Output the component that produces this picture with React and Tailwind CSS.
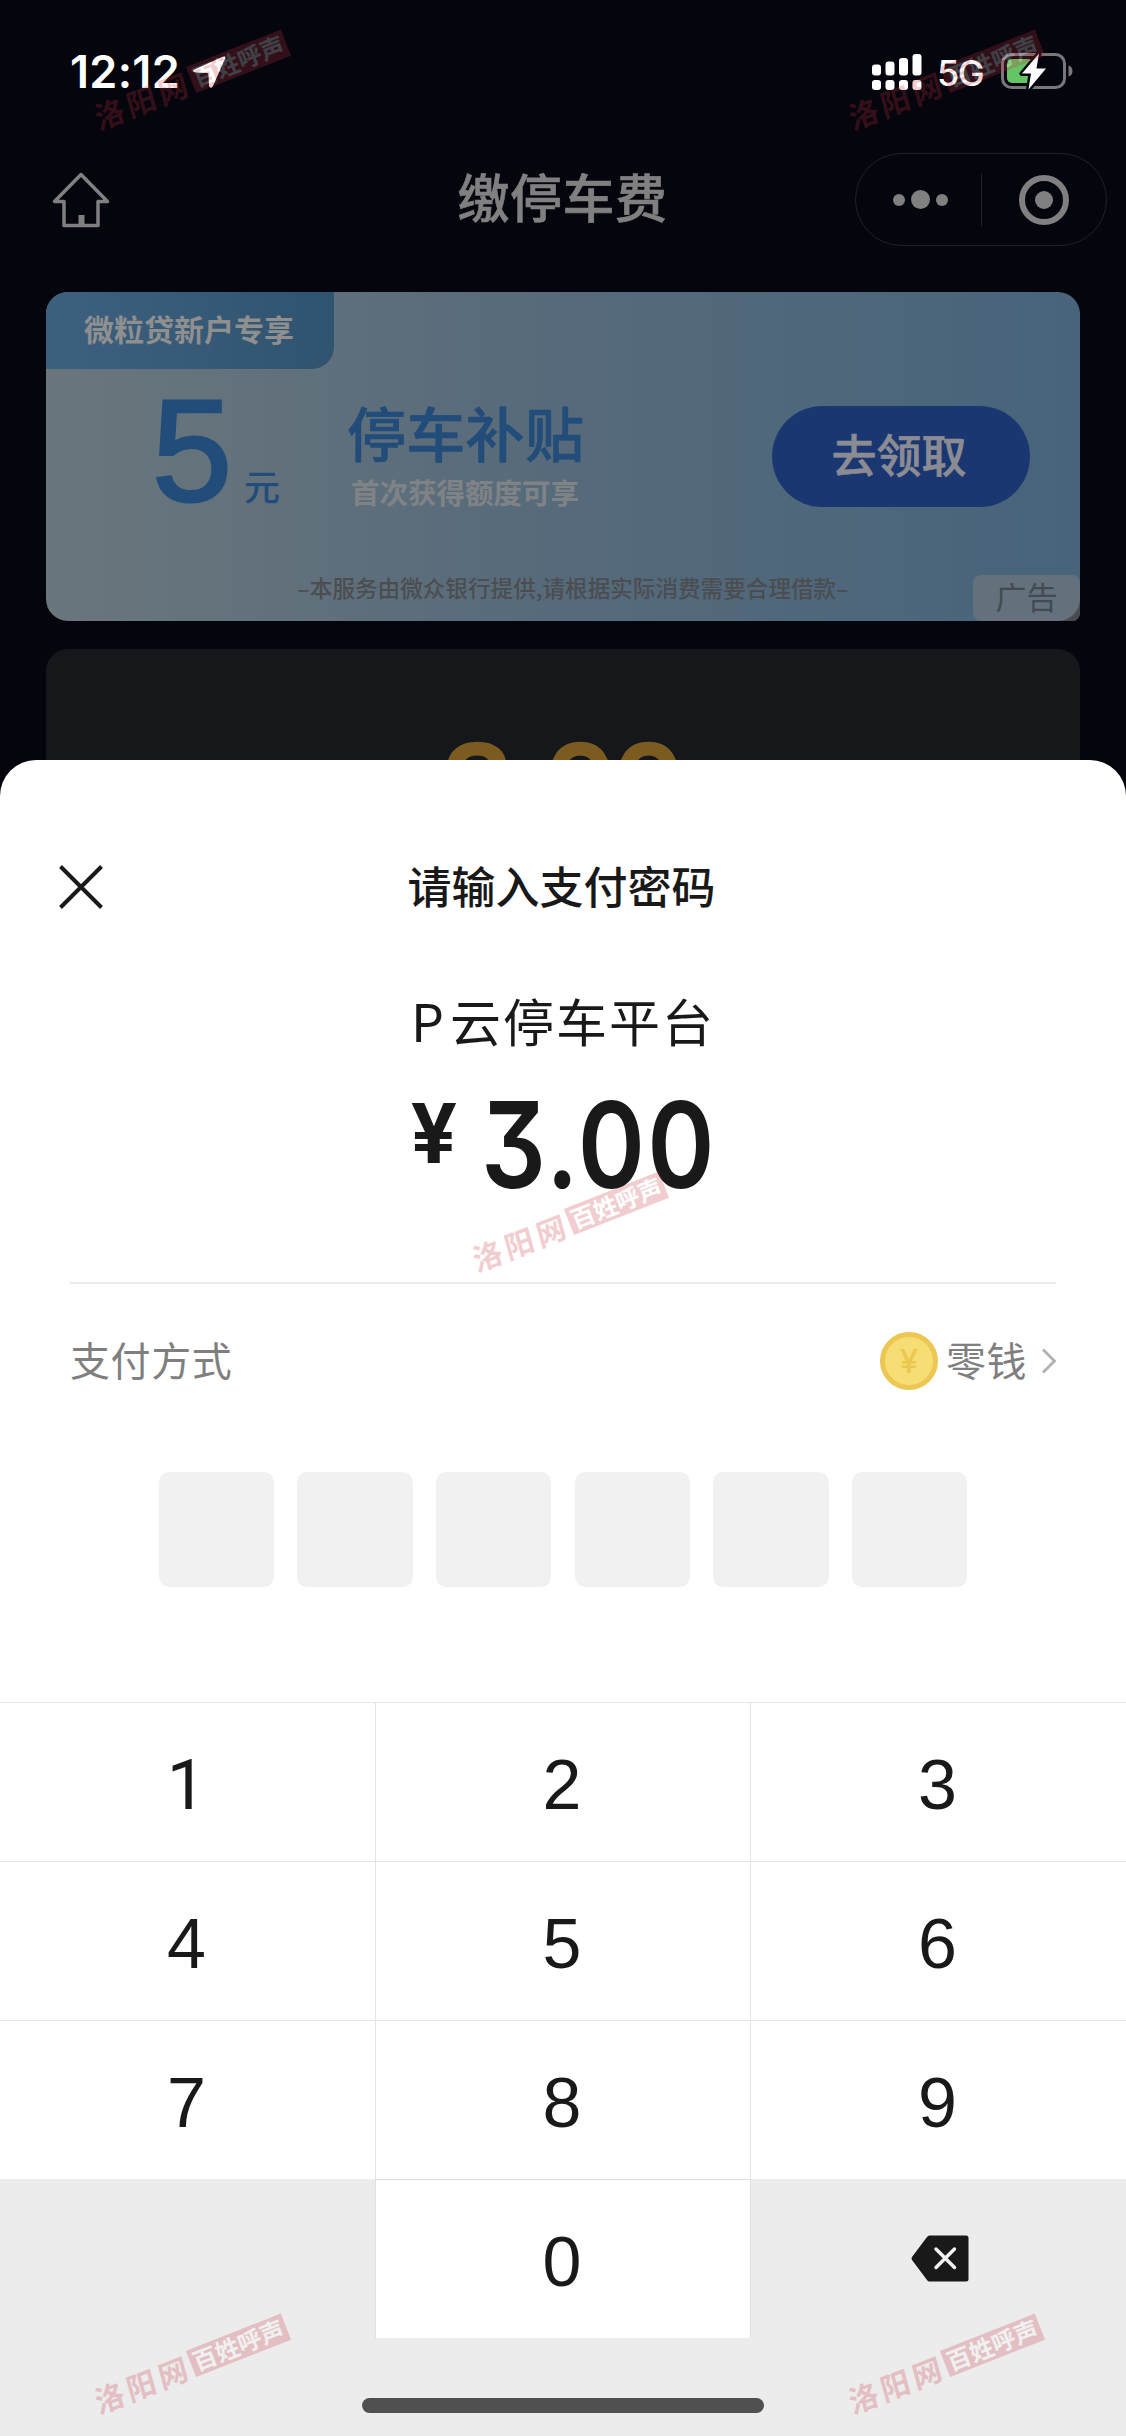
import React from 'react';

const keys = ['1', '2', '3', '4', '5', '6', '7', '8', '9'];

const watermarks = [
  { x: 191, y: 80 },
  { x: 945, y: 80 },
  { x: 569, y: 1222 },
  { x: 191, y: 2364 },
  { x: 945, y: 2364 },
];

// Status Bar
const StatusBar = () => {
  return (
    <div className="flex h-[153px] items-start justify-between pl-[70px] pr-[51px] pt-[46px] text-white">
      <div className="flex h-[52px] items-center">
        <span className="w-[112px] whitespace-nowrap font-['Inter'] text-[45px] font-semibold leading-[52px] tracking-[0.300px]">12:12</span>
        <svg width="36" height="36" viewBox="0 0 36 36" className="ml-[9px]">
          <path d="M3.5 15.5 L31 3 Q35.5 1 33.7 5.5 L22 32 Q20 35.500 18 32 L17.500 20.500 Q17.500 19 16 19 L4.500 18.500 Q0 17.500 3.500 15.500Z" fill="#fff" />
        </svg>
      </div>
      <div className="flex h-[52px] items-center">
        <svg width="50" height="36" viewBox="0 0 50 36" fill="#fff">
          <rect x="0" y="10.500" width="9" height="11" rx="3" />
          <rect x="13.500" y="7.500" width="9" height="14" rx="3" />
          <rect x="27" y="4" width="9" height="17.500" rx="3" />
          <rect x="40.500" y="0" width="9" height="21.500" rx="3" />
          <rect x="0" y="26" width="9" height="10" rx="3" />
          <rect x="13.500" y="26" width="9" height="10" rx="3" />
          <rect x="27" y="26" width="9" height="10" rx="3" />
          <rect x="40.500" y="26" width="9" height="10" rx="3" />
        </svg>
        <span className="ml-[15px] w-[48px] whitespace-nowrap pt-[2px] font-['Inter'] text-[36px] font-medium leading-[48px] tracking-[-1.500px]">5G</span>
        <svg width="74" height="38" viewBox="0 0 74 38" className="ml-[16px]">
          <rect x="1.500" y="1.500" width="62" height="33" rx="9" fill="none" stroke="#77777c" strokeWidth="3" />
          <path d="M67.500 12.500 q4 1 4 5.500 t-4 5.500z" fill="#77777c" />
          <rect x="6" y="6" width="26" height="24" rx="5" fill="#65c466" />
          <path d="M38 0.500 L21 20.500 H30 L27.500 36.500 L45 15.500 H35.500Z" fill="#fff" stroke="#04050d" strokeWidth="5" strokeLinejoin="round" paintOrder="stroke" />
        </svg>
      </div>
    </div>
  );
};

// Mini program navigation
const NavBar = () => {
  return (
    <div className="flex h-[93px] items-center justify-between pl-[52px] pr-[19px]">
      <div className="w-[252px]">
        <svg width="58" height="56" viewBox="0 0 58 56" fill="none" stroke="#808080" strokeWidth="3.500" strokeLinejoin="round" strokeLinecap="round">
          <path d="M29 2.500 L55.500 29.500 H46 V53.500 H12 V29.500 H2.500 Z" />
          <path d="M29.500 43 V53" strokeWidth="6" strokeLinecap="butt" />
        </svg>
      </div>
      <div className="pb-2 pr-[34px] text-[52px] font-medium leading-[85px] tracking-[0.500px] text-[#808080] [-webkit-text-stroke:0.600px_#808080]">缴停车费</div>
      <div className="flex h-[93px] w-[252px] items-center rounded-full border border-[#212228]">
        <div className="flex w-[125px] items-center justify-center gap-[6px] pl-[5px]">
          <span className="size-3 rounded-full bg-[#808080]"></span>
          <span className="size-[19px] rounded-full bg-[#808080]"></span>
          <span className="size-3 rounded-full bg-[#808080]"></span>
        </div>
        <div className="h-[54px] w-px bg-[#212228]"></div>
        <div className="flex flex-1 items-center justify-center">
          <div className="flex size-[50px] items-center justify-center rounded-full border-[6px] border-[#808080]">
            <span className="size-[18px] rounded-full bg-[#808080]"></span>
          </div>
        </div>
      </div>
    </div>
  );
};

// Ad banner
const Banner = () => {
  return (
    <div className="relative mx-[46px] mt-[46px] flex h-[329px] flex-col overflow-hidden rounded-[22px] rounded-br-[8px] bg-linear-to-r from-[#6a767c] via-[#566a7b] to-[#47647b]">
      <div className="flex h-[77px] w-[288px] shrink-0 items-center justify-center rounded-br-[22px] bg-linear-to-r from-[#3d607f] to-[#30546f] pb-[5px] pr-[2px] text-[30px] font-bold leading-[72px] text-[#8f8f8f]">
        微粒贷新户专享
      </div>
      <div className="flex h-[180px] items-start pl-[106px]">
        <span className="w-[92px] font-['Liberation_Sans'] text-[144px] leading-[166px] text-[#224c79] [-webkit-text-stroke:3px_#224c79]">5</span>
        <span className="w-[103px] pt-[90px] text-[36px] font-medium leading-[52px] text-[#224c79]">元</span>
        <div className="w-[425px]">
          <div className="pt-[28px] text-[59px] font-medium leading-[70px] tracking-[0.300px] text-[#224c79] [-webkit-text-stroke:0.600px_#224c79]">停车补贴</div>
          <div className="pl-1 pt-[8px] text-[28.500px] font-bold leading-[34px] text-[#808386]">首次获得额度可享</div>
        </div>
        <div className="mt-[37px] flex h-[101px] w-[258px] items-center justify-center rounded-full bg-[#1b3772] pb-[5px] pr-[4px] text-[45px] font-medium text-[#8b8c93] [-webkit-text-stroke:0.600px_#8b8c93]">去领取</div>
      </div>
      <div className="pt-[5px] text-center text-[22.600px] font-medium leading-[67px] text-[#4b4d50]">
        <span className="pl-[20px]">–本服务由微众银行提供,请根据实际消费需要合理借款–</span>
      </div>
      <div className="absolute bottom-0 right-0 size-5 bg-[#4a4b4e]"></div>
      <div className="absolute bottom-0 right-0 flex h-[46px] w-[107px] items-center justify-center rounded-[8px] rounded-br-[22px] bg-[#64707b] pb-[4px] text-[31px] leading-[40px] text-[#424a53]">
        广告
      </div>
    </div>
  );
};

// Keypad
const Keypad = () => {
  return (
    <div className="flex flex-1 flex-col bg-[#ececec]">
      <div className="grid grid-cols-[376px_375px_375px] font-['Liberation_Sans'] text-[70px] text-[#191919]">
        {keys.map((key) => (
          <div
            key={key}
            className={`
              flex h-[159px] items-center justify-center border-r border-t border-[#e4e4e4] bg-white pr-[2px] pt-[6px] nth-[3n]:border-r-0
              ${key === '1' ? "font-['Roboto']" : ''}
            `}
          >
            {key}
          </div>
        ))}
        <div className="h-[159px] border-r border-[#e0e0e0]"></div>
        <div className="flex h-[159px] items-center justify-center border-r border-t border-[#e0e0e0] bg-white pr-[2px] pt-[6px]">0</div>
        <div className="flex h-[159px] items-center pl-[160px]">
          <svg width="58" height="47" viewBox="0 0 58 47">
            <path d="M18.500 0.500 H55 Q57.500 0.500 57.500 3 V44 Q57.500 46.500 55 46.500 H18.500 Q17 46.500 16 45 L1 25 Q0 23.500 1 22 L16 2 Q17 0.500 18.500 0.500Z" fill="#191919" />
            <path d="M25 14 L43.500 32.500 M43.500 14 L25 32.500" stroke="#f2f2f2" strokeWidth="3.500" strokeLinecap="round" />
          </svg>
        </div>
      </div>
      <div className="mx-auto mt-[60px] h-[15px] w-[402px] rounded-full bg-[#505050]"></div>
    </div>
  );
};

// Password Sheet
const PaySheet = () => {
  return (
    <div className="flex flex-1 flex-col rounded-t-[36px] bg-white text-[#191919]">
      <div className="mt-[83px] flex h-[88px] items-center justify-between px-[58px]">
        <svg width="46" height="46" viewBox="0 0 46 46" stroke="#191919" strokeWidth="4">
          <path d="M2.500 2.500 L43.500 43.500 M43.500 2.500 L2.500 43.500" />
        </svg>
        <div className="pb-[5px] pr-[3px] text-[44px] font-medium leading-[80px]">请输入支付密码</div>
        <div className="w-[46px]"></div>
      </div>
      <div className="mt-[49px] text-center text-[51px] leading-[80px] tracking-[2px]">
        <span className="pr-1 text-[52px]">P</span>云停车平台
      </div>
      <div className="mt-[15px] flex h-[140px] items-start justify-center font-['Inter']">
        <span className="w-[70px] pt-[9px] text-[82px] font-bold leading-[100px]">¥</span>
        <span className="w-[235px] origin-left scale-x-[0.85] whitespace-nowrap text-[120px] font-semibold leading-[140px] tracking-[2.500px] [font-feature-settings:'cv09']">3.00</span>
      </div>
      <div className="mx-[70px] mt-[67px] border-t-2 border-[#ececec]"></div>
      <div className="mx-[70px] mt-[37px] flex h-[80px] items-center justify-between text-[40px] leading-[70px] text-[#7f7f7f]">
        <span className="pb-[5px] tracking-[0.600px]">支付方式</span>
        <div className="flex items-center">
          <div className="flex size-[58px] items-center justify-center rounded-full border-[5px] border-[#ecc753] bg-[#f7de74]">
            <span className="font-['Inter'] text-[33px] font-medium leading-none text-[#ebc84f]">¥</span>
          </div>
          <span className="ml-2 pb-[5px] tracking-[0.500px]">零钱</span>
          <svg width="16" height="28" viewBox="0 0 16 28" fill="none" stroke="#b2b2b2" strokeWidth="3" className="ml-[13px]">
            <path d="M3 2.500 L14.500 14 L3 25.500" />
          </svg>
        </div>
      </div>
      <div className="mt-[71px] flex justify-center gap-[23.400px]">
        {[0, 1, 2, 3, 4, 5].map((i) => (
          <div key={i} className="size-[115.300px] rounded-[10px] bg-[#f1f1f1]"></div>
        ))}
      </div>
      <div className="mt-[115px] flex flex-1 flex-col">
        <Keypad />
      </div>
    </div>
  );
};

const Watermark = ({ x, y }) => {
  return (
    <div
      className="pointer-events-none absolute flex h-[28px] w-[206px] -translate-x-1/2 -translate-y-1/2 -rotate-[21.500deg] items-center whitespace-nowrap text-[#c8323f] opacity-[0.24]"
      style={{ left: x, top: y }}
    >
      <span className="w-[103px] -skew-x-6 text-[30px] font-bold leading-[28px] tracking-[4px]">洛阳网</span>
      <span className="flex h-[28px] w-[102px] items-center justify-center bg-[#c8323f] pb-[2px] text-[24px] font-semibold leading-[26px] text-white">百姓呼声</span>
    </div>
  );
};

const App = () => {
  return (
    <div className="relative flex h-[2436px] w-[1126px] flex-col overflow-hidden bg-[#04050d] font-['Noto_Sans_CJK_SC',sans-serif]">
      <StatusBar />
      <NavBar />
      <Banner />
      <div className="mx-[46px] mt-[28px] h-[111px] shrink-0 overflow-hidden rounded-t-[22px] bg-[#16171b] pt-[76px] text-center font-['Liberation_Sans'] text-[123px] leading-[126px] text-[#7c5b21] [-webkit-text-stroke:5px_#7c5b21]">
        3.00
      </div>
      <PaySheet />
      {watermarks.map((mark, index) => (
        <Watermark key={index} x={mark.x} y={mark.y} />
      ))}
    </div>
  );
};

export default App;
